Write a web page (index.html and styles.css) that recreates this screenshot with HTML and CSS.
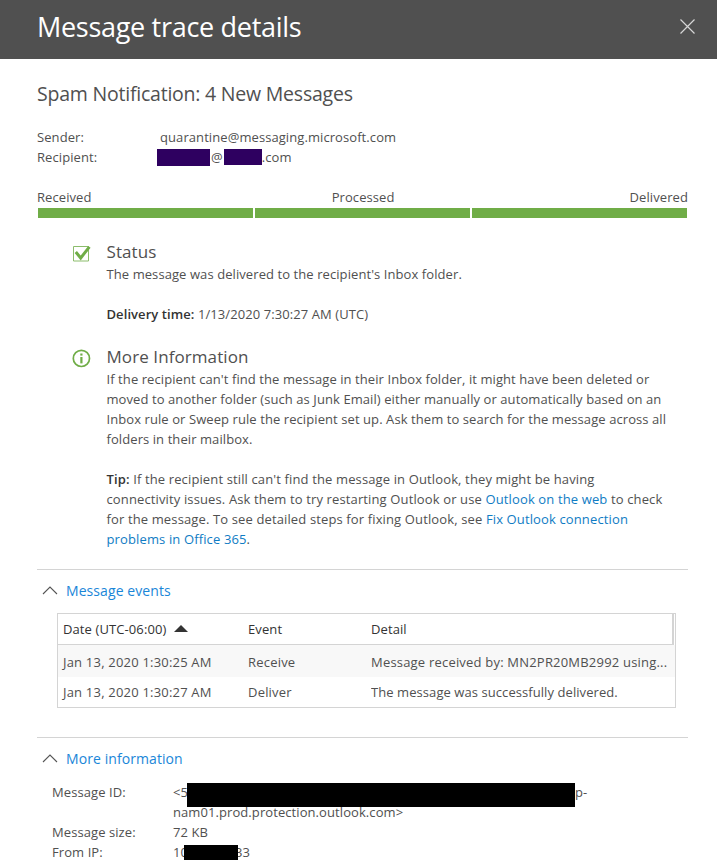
FILE: index.html
```html
<!DOCTYPE html>
<html lang="en">
<head>
<meta charset="utf-8">
<title>Message trace details</title>
<link rel="stylesheet" href="styles.css">
</head>
<body>
<div class="panel">
  <header class="header">
    <h1 class="title">Message trace details</h1>
    <svg class="close" width="15" height="15" viewBox="0 0 15 15"><path d="M0.5 0.5L14.5 14.5M14.5 0.5L0.5 14.5" stroke="#d6d6d6" stroke-width="1.2" fill="none"/></svg>
  </header>
  <main class="content">
    <h2 class="subject">Spam Notification: 4 New Messages</h2>
    <dl class="people">
      <dt>Sender:</dt><dd>quarantine@messaging.microsoft.com</dd>
      <dt>Recipient:</dt><dd class="recipient"><span class="redact-a"></span>@<span class="redact-b"></span>.com</dd>
    </dl>
    <div class="progress-labels"><span>Received</span><span class="mid">Processed</span><span>Delivered</span></div>
    <div class="progress"><i></i><i></i><i></i></div>

    <section class="notice status">
      <svg class="notice-icon" width="19" height="18" viewBox="0 0 19 18"><path d="M1.5 1.5H16.5V16H1.5Z" fill="none" stroke="#8cbd6c" stroke-width="1"/><path d="M3.8 7L8.7 13L17.4 1.8" fill="none" stroke="#70ad47" stroke-width="3"/></svg>
      <div class="notice-body">
        <h3>Status</h3>
        <p>The message was delivered to the recipient's Inbox folder.</p>
        <p class="gap"><b>Delivery time:</b> 1/13/2020 7:30:27 AM (UTC)</p>
      </div>
    </section>
    <section class="notice info">
      <svg class="notice-icon" width="19" height="19" viewBox="0 0 19 19"><circle cx="9.4" cy="9.4" r="8.1" fill="none" stroke="#70ad47" stroke-width="1.7"/><rect x="8.3" y="8" width="2.2" height="6.4" fill="#70ad47"/><rect x="8.3" y="4.5" width="2.2" height="2.1" fill="#70ad47"/></svg>
      <div class="notice-body">
        <h3>More Information</h3>
        <p>If the recipient can't find the message in their Inbox folder, it might have been deleted or<br>moved to another folder (such as Junk Email) either manually or automatically based on an<br>Inbox rule or Sweep rule the recipient set up. Ask them to search for the message across all<br>folders in their mailbox.</p>
        <p class="gap tip"><b>Tip:</b> If the recipient still can't find the message in Outlook, they might be having<br>connectivity issues. Ask them to try restarting Outlook or use <a href="#">Outlook on the web</a> to check<br>for the message. To see detailed steps for fixing Outlook, see <a href="#">Fix Outlook connection<br>problems in Office 365</a>.</p>
      </div>
    </section>

    <section class="fold events">
      <div class="fold-head">
        <svg class="chevron" width="16" height="9" viewBox="0 0 16 9"><path d="M1 8L8 1L15 8" fill="none" stroke="#555" stroke-width="1.1"/></svg>
        <a href="#">Message events</a>
      </div>
      <div class="table">
        <div class="row head"><span class="c1">Date (UTC-06:00) <svg class="sort" width="14" height="7" viewBox="0 0 14 7"><path d="M7 0L14 7H0Z" fill="#333"/></svg></span><span class="c2">Event</span><span class="c3">Detail</span></div>
        <div class="row shade"><span class="c1">Jan 13, 2020 1:30:25 AM</span><span class="c2">Receive</span><span class="c3">Message received by: MN2PR20MB2992 using...</span></div>
        <div class="row"><span class="c1">Jan 13, 2020 1:30:27 AM</span><span class="c2">Deliver</span><span class="c3 tight">The message was successfully delivered.</span></div>
      </div>
    </section>

    <section class="fold more">
      <div class="fold-head">
        <svg class="chevron" width="16" height="9" viewBox="0 0 16 9"><path d="M1 8L8 1L15 8" fill="none" stroke="#555" stroke-width="1.1"/></svg>
        <a href="#">More information</a>
      </div>
      <dl class="facts">
        <dt>Message ID:</dt><dd class="mask-host">&lt;5<span class="tail">p-</span><br>nam01.prod.protection.outlook.com&gt;<span class="mask mask-id"></span></dd>
        <dt>Message size:</dt><dd>72 KB</dd>
        <dt>From IP:</dt><dd class="mask-host">10<span class="tail-ip">33</span><span class="mask mask-ip"></span></dd>
      </dl>
    </section>
  </main>
</div>
</body>
</html>
```
FILE: styles.css
```css
* { box-sizing: border-box; }
html, body { margin: 0; padding: 0; height: 100%; overflow: hidden; background: #fff; }
body { font-family: "Open Sans", "Noto Sans", "Liberation Sans", sans-serif; font-size: 13px; line-height: 20px; letter-spacing: 0.08px; color: #505050; width: 717px; height: 866px; }
a { color: #0f7cc4; text-decoration: none; }
p, h1, h2, h3, dl, dd, dt { margin: 0; font-weight: normal; }

.header { height: 59px; background: #505050; display: flex; align-items: center; justify-content: space-between; padding: 0 22px 5px 37px; }
.title { font-size: 27px; line-height: 54px; color: #fff; letter-spacing: -0.3px; }
.close { display: block; margin-top: -1px; }

.content { padding: 0 29px 0 37px; }
.subject { font-size: 19.5px; line-height: 28px; margin-top: 21px; color: #505050; letter-spacing: -0.22px; }

.people { display: grid; grid-template-columns: 123px 1fr; margin-top: 19px; }
.people dt, .people dd { line-height: 20px; }
.recipient { display: flex; align-items: center; margin-left: -3px; }
.redact-a { width: 53px; height: 17px; background: #2e0060; display: block; margin-right: 1px; }
.redact-b { width: 38px; height: 16px; background: #2e0060; display: block; margin-left: 1px; margin-top: -1px; }

.progress-labels { display: flex; justify-content: space-between; margin-top: 20px; }
.mid { margin-left: 5px; }
.progress { display: grid; grid-template-columns: repeat(3, 1fr); gap: 2px; height: 10px; margin-top: 1px; padding: 0 1px; }
.progress i { display: block; background: #70ad47; }

.notice { display: flex; margin-top: 22px; padding-left: 35px; }
.notice-icon { flex: none; margin-top: 5px; margin-right: 16px; }
.notice-body { flex: 1; margin-left: -0.5px; }
.notice h3 { font-size: 17px; line-height: 24px; color: #505050; }
.notice p { line-height: 20px; white-space: nowrap; }
.gap { margin-top: 20px; }
.info { margin-top: 21px; }
.info .notice-icon { margin-top: 4px; }
.tip { letter-spacing: 0.13px; }
b { font-weight: 600; color: #333; }

.fold { border-top: 1px solid #d4d4d4; }
.events { margin-top: 20px; height: 168px; }
.fold-head { display: flex; align-items: center; gap: 8px; height: 20px; margin-top: 11px; padding-left: 5px; }
.fold-head a { font-size: 14px; color: #1a86d8; }
.chevron { margin-bottom: 2px; }
.table { margin: 12px 12px 0 20px; border: 1px solid #d4d4d4; }
.row { display: flex; height: 30px; align-items: center; padding-left: 5px; letter-spacing: 0.2px; }
.row.head { height: 31px; border-bottom: 1px solid #d4d4d4; color: #333; border-right: 2px solid #d4d4d4; margin-right: 1px; letter-spacing: 0.1px; }
.row.shade { background: #f8f8f8; height: 32px; padding-top: 2px; }
.c1 { width: 185px; display: flex; align-items: center; gap: 8px; }
.c2 { width: 123px; }
.c3 { flex: 1; white-space: nowrap; overflow: hidden; }
.tight { letter-spacing: 0.07px; }
.sort { margin-bottom: 2px; }

.facts { display: grid; grid-template-columns: 121px 1fr; margin: 13px 0 0 15px; }
.facts dt, .facts dd { line-height: 20px; }
.mask-host { position: relative; }
.mask { position: absolute; background: #000; display: block; }
.mask-id { left: 14px; top: 1px; width: 388px; height: 24px; }
.tail { position: absolute; left: 402px; top: 0; }
.mask-ip { left: 11px; top: 3px; width: 54px; height: 15px; }
.tail-ip { position: absolute; left: 62px; top: 0; }
```
